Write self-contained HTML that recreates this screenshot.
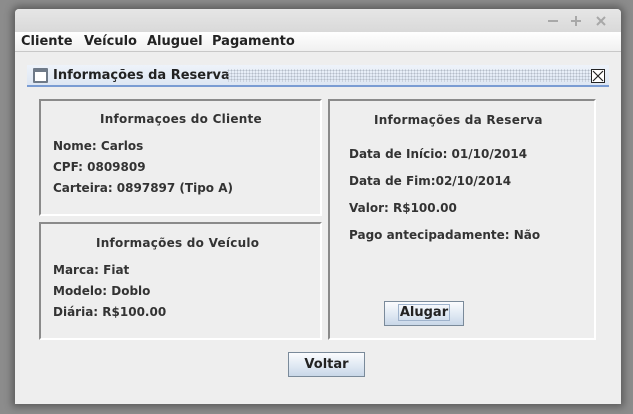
<!DOCTYPE html>
<html><head><style>
*{margin:0;padding:0;box-sizing:border-box}
body{width:633px;height:414px;background:#8c8c8c;position:relative;overflow:hidden;font-family:"DejaVu Sans","Liberation Sans",sans-serif;font-weight:bold;font-size:12px;color:#333}
.a{position:absolute}
.win{left:15px;top:9px;width:606px;height:395px;background:#eeeeee;border-radius:4px 4px 0 0;box-shadow:0 0 8px 3px rgba(0,0,0,.35);overflow:hidden}
.tb{left:0;top:0;width:606px;height:23px;background:linear-gradient(#e6e6e6,#d9d9d9)}
.mb{left:0;top:23px;width:606px;height:20px;background:linear-gradient(#ffffff,#f0f0f0);border-bottom:1px solid #c8c8c8;font-size:13px;color:#222}
.mb span{position:absolute;top:2px}
.ib{left:12px;top:56px;width:582px;height:22px;background:linear-gradient(#eef3fa,#dde6f3);border-bottom:2px solid #7a9cd3}
.dots{left:200px;top:4px;width:370px;height:13px;background-image:radial-gradient(#b4bcc8 0.8px,transparent 0.9px);background-size:3px 3px}
.box{border-top:2px solid #8a8a8a;border-left:2px solid #8a8a8a;border-right:2px solid #fff;border-bottom:2px solid #fff}
.t{position:absolute;white-space:nowrap}
.btn{border:1px solid #7a8a9a;background:linear-gradient(#fbfcfe,#dde7f2 60%,#c9d7e8);text-align:center;font-size:13px;color:#222}
</style></head><body>
<div class="a win">
 <div class="a tb">
  <svg class="a" style="left:530px;top:6px" width="70" height="12">
   <path d="M3 6H13" stroke="#a8a8a8" stroke-width="2"/>
   <path d="M26 6H36M31 1V11" stroke="#a8a8a8" stroke-width="2"/>
   <path d="M52 2L60 10M60 2L52 10" stroke="#a8a8a8" stroke-width="2"/>
  </svg>
 </div>
 <div class="a mb">
  <span style="left:6px">Cliente</span><span style="left:69px">Veículo</span><span style="left:132px">Aluguel</span><span style="left:197px">Pagamento</span>
 </div>
 <div class="a ib">
  <div class="a" style="left:6px;top:3px;width:15px;height:15px;border:2px solid #6f7a88;border-top-width:4px;background:#fff;border-radius:1px"></div>
  <div class="t" style="left:26px;top:3px;font-size:13px;color:#222">Informações da Reserva</div>
  <div class="a dots"></div>
  <div class="a" style="left:564px;top:4px;width:14px;height:14px;border:1px solid #222;background:#fff">
   <svg width="12" height="12" style="position:absolute;left:0;top:0"><path d="M1 1L11 11M11 1L1 11" stroke="#222" stroke-width="1.2"/></svg>
  </div>
 </div>
 <div class="a box" style="left:24px;top:90px;width:283px;height:117px">
  <div class="t" style="left:59px;top:11px;letter-spacing:0.25px">Informaçoes do Cliente</div>
  <div class="t" style="left:12px;top:38px">Nome: Carlos</div>
  <div class="t" style="left:12px;top:59px">CPF: 0809809</div>
  <div class="t" style="left:12px;top:80px">Carteira: 0897897 (Tipo A)</div>
 </div>
 <div class="a box" style="left:24px;top:213px;width:283px;height:118px">
  <div class="t" style="left:55px;top:12px;letter-spacing:0.25px">Informações do Veículo</div>
  <div class="t" style="left:12px;top:39px">Marca: Fiat</div>
  <div class="t" style="left:12px;top:60px">Modelo: Doblo</div>
  <div class="t" style="left:12px;top:81px">Diária: R$100.00</div>
 </div>
 <div class="a box" style="left:313px;top:90px;width:268px;height:241px">
  <div class="t" style="left:44px;top:12px;letter-spacing:0.25px">Informações da Reserva</div>
  <div class="t" style="left:19px;top:46px">Data de Início: 01/10/2014</div>
  <div class="t" style="left:19px;top:73px">Data de Fim:02/10/2014</div>
  <div class="t" style="left:19px;top:100px">Valor: R$100.00</div>
  <div class="t" style="left:19px;top:127px">Pago antecipadamente: Não</div>
 </div>
 <div class="a btn" style="left:369px;top:292px;width:80px;height:25px;line-height:21px"><span style="border:1px solid #9fb3cc;padding:0 1px">Alugar</span></div>
 <div class="a btn" style="left:273px;top:343px;width:77px;height:25px;line-height:23px">Voltar</div>
</div>
</body></html>
